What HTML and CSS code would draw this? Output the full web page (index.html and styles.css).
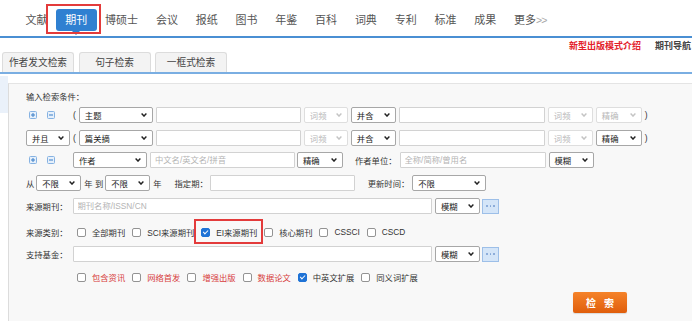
FILE: index.html
```html
<!DOCTYPE html>
<html lang="zh-CN">
<head>
<meta charset="utf-8">
<title>期刊检索</title>
<link rel="stylesheet" href="styles.css">
</head>
<body>
<header class="nav">
  <a class="nav-item">文献</a>
  <a class="nav-item active"><span class="pill">期刊</span><span class="mark-box nav-mark"></span></a>
  <a class="nav-item">博硕士</a>
  <a class="nav-item">会议</a>
  <a class="nav-item">报纸</a>
  <a class="nav-item">图书</a>
  <a class="nav-item">年鉴</a>
  <a class="nav-item">百科</a>
  <a class="nav-item">词典</a>
  <a class="nav-item">专利</a>
  <a class="nav-item">标准</a>
  <a class="nav-item">成果</a>
  <a class="nav-item">更多<span class="more-arrows">&gt;&gt;</span></a>
</header>

<div class="subbar">
  <a class="promo">新型出版模式介绍</a>
  <a class="guide">期刊导航</a>
</div>

<nav class="tabs">
  <a class="tab">作者发文检索</a>
  <a class="tab">句子检索</a>
  <a class="tab">一框式检索</a>
</nav>

<main class="main">
  <aside class="side"><div class="side-active"></div></aside>
  <section class="panel">
    <div class="title">输入检索条件：</div>

    <div class="row r1">
      <span class="lead icons">
        <svg class="pm" viewBox="0 0 8 8"><rect x="0.5" y="0.5" width="7" height="7" rx="1"/><path d="M2 4h4M4 2v4"/></svg>
        <svg class="pm" viewBox="0 0 8 8"><rect x="0.5" y="0.5" width="7" height="7" rx="1"/><path d="M2 4h4"/></svg>
      </span>
      <span class="paren">(</span>
      <span class="sel w74">主题<svg class="chev" viewBox="0 0 6 4"><path d="M0.6 0.6L3 3.1L5.4 0.6"/></svg></span>
      <input class="inp w145" type="text">
      <span class="sel dis w44">词频<svg class="chev" viewBox="0 0 6 4"><path d="M0.6 0.6L3 3.1L5.4 0.6"/></svg></span>
      <span class="sel w45">并含<svg class="chev" viewBox="0 0 6 4"><path d="M0.6 0.6L3 3.1L5.4 0.6"/></svg></span>
      <input class="inp w146" type="text">
      <span class="sel dis w45">词频<svg class="chev" viewBox="0 0 6 4"><path d="M0.6 0.6L3 3.1L5.4 0.6"/></svg></span>
      <span class="sel dis w46">精确<svg class="chev" viewBox="0 0 6 4"><path d="M0.6 0.6L3 3.1L5.4 0.6"/></svg></span>
      <span class="paren">)</span>
    </div>

    <div class="row r2">
      <span class="sel lead-sel">并且<svg class="chev" viewBox="0 0 6 4"><path d="M0.6 0.6L3 3.1L5.4 0.6"/></svg></span>
      <span class="paren">(</span>
      <span class="sel w74">篇关摘<svg class="chev" viewBox="0 0 6 4"><path d="M0.6 0.6L3 3.1L5.4 0.6"/></svg></span>
      <input class="inp w145" type="text">
      <span class="sel dis w44">词频<svg class="chev" viewBox="0 0 6 4"><path d="M0.6 0.6L3 3.1L5.4 0.6"/></svg></span>
      <span class="sel w45">并含<svg class="chev" viewBox="0 0 6 4"><path d="M0.6 0.6L3 3.1L5.4 0.6"/></svg></span>
      <input class="inp w146" type="text">
      <span class="sel dis w45">词频<svg class="chev" viewBox="0 0 6 4"><path d="M0.6 0.6L3 3.1L5.4 0.6"/></svg></span>
      <span class="sel w46">精确<svg class="chev" viewBox="0 0 6 4"><path d="M0.6 0.6L3 3.1L5.4 0.6"/></svg></span>
      <span class="paren">)</span>
    </div>

    <div class="row r3">
      <span class="lead icons">
        <svg class="pm" viewBox="0 0 8 8"><rect x="0.5" y="0.5" width="7" height="7" rx="1"/><path d="M2 4h4M4 2v4"/></svg>
        <svg class="pm" viewBox="0 0 8 8"><rect x="0.5" y="0.5" width="7" height="7" rx="1"/><path d="M2 4h4"/></svg>
      </span>
      <span class="sel w74">作者<svg class="chev" viewBox="0 0 6 4"><path d="M0.6 0.6L3 3.1L5.4 0.6"/></svg></span>
      <input class="inp w145" type="text" placeholder="中文名/英文名/拼音">
      <span class="sel w46 tight">精确<svg class="chev" viewBox="0 0 6 4"><path d="M0.6 0.6L3 3.1L5.4 0.6"/></svg></span>
      <span class="label unit">作者单位：</span>
      <input class="inp w146" type="text" placeholder="全称/简称/曾用名">
      <span class="sel w45">模糊<svg class="chev" viewBox="0 0 6 4"><path d="M0.6 0.6L3 3.1L5.4 0.6"/></svg></span>
    </div>

    <div class="row r4">
      <span class="label">从</span>
      <span class="sel w45">不限<svg class="chev" viewBox="0 0 6 4"><path d="M0.6 0.6L3 3.1L5.4 0.6"/></svg></span>
      <span class="label sp">年 到</span>
      <span class="sel w45">不限<svg class="chev" viewBox="0 0 6 4"><path d="M0.6 0.6L3 3.1L5.4 0.6"/></svg></span>
      <span class="label sp">年</span>
      <span class="label far">指定期：</span>
      <input class="inp w145" type="text">
      <span class="label far">更新时间：</span>
      <span class="sel w74 sp">不限<svg class="chev" viewBox="0 0 6 4"><path d="M0.6 0.6L3 3.1L5.4 0.6"/></svg></span>
    </div>

    <div class="row r5">
      <span class="label lead">来源期刊：</span>
      <input class="inp w359" type="text" placeholder="期刊名称/ISSN/CN">
      <span class="sel w45">模糊<svg class="chev" viewBox="0 0 6 4"><path d="M0.6 0.6L3 3.1L5.4 0.6"/></svg></span>
      <span class="dots"><i></i><i></i><i></i></span>
    </div>

    <div class="row r6">
      <span class="label lead">来源类别：</span>
      <span class="checks">
        <label class="chk"><input class="cb" type="checkbox"><span>全部期刊</span></label>
        <label class="chk"><input class="cb" type="checkbox"><span>SCI来源期刊</span></label>
        <label class="chk marked"><input class="cb" type="checkbox" checked><span>EI来源期刊</span><span class="mark-box"></span></label>
        <label class="chk"><input class="cb" type="checkbox"><span>核心期刊</span></label>
        <label class="chk"><input class="cb" type="checkbox"><span>CSSCI</span></label>
        <label class="chk"><input class="cb" type="checkbox"><span>CSCD</span></label>
      </span>
    </div>

    <div class="row r7">
      <span class="label lead">支持基金：</span>
      <input class="inp w359" type="text">
      <span class="sel w45">模糊<svg class="chev" viewBox="0 0 6 4"><path d="M0.6 0.6L3 3.1L5.4 0.6"/></svg></span>
      <span class="dots"><i></i><i></i><i></i></span>
    </div>

    <div class="row r8">
      <span class="lead"></span>
      <span class="checks">
        <label class="chk red"><input class="cb" type="checkbox"><span>包含资讯</span></label>
        <label class="chk red"><input class="cb" type="checkbox"><span>网络首发</span></label>
        <label class="chk red"><input class="cb" type="checkbox"><span>增强出版</span></label>
        <label class="chk red"><input class="cb" type="checkbox"><span>数据论文</span></label>
        <label class="chk"><input class="cb" type="checkbox" checked><span>中英文扩展</span></label>
        <label class="chk"><input class="cb" type="checkbox"><span>同义词扩展</span></label>
      </span>
    </div>

    <div class="row r9">
      <button class="search" type="button">检 索</button>
    </div>
  </section>
</main>
</body>
</html>
```

FILE: styles.css
```css
* { box-sizing: border-box; }
html, body { margin: 0; padding: 0; }
body {
  width: 692px;
  height: 321px;
  overflow: hidden;
  background: #fff;
  color: #333;
  font-family: "Liberation Sans", "Noto Sans CJK SC", sans-serif;
}
a { text-decoration: none; color: inherit; cursor: pointer; }

/* ---------- top navigation ---------- */
.nav {
  display: flex;
  align-items: center;
  height: 38px;
  padding: 4px 0 0 25.5px;
  gap: 17.8px;
  border-bottom: 2px solid #4a8fd3;
  font-size: 11px;
}
.nav-item {
  position: relative;
  height: 22px;
  line-height: 22px;
  color: #555;
  white-space: nowrap;
}
.pill {
  position: relative;
  display: block;
  margin: 0 -9.3px;
  padding: 0 9.3px;
  border-radius: 3px;
  background: #2f80d1;
  color: #fff;
}
.pill::after {
  content: "";
  position: absolute;
  left: 50%;
  bottom: -4px;
  margin-left: -4px;
  border-left: 4px solid transparent;
  border-right: 4px solid transparent;
  border-top: 4px solid #2f80d1;
}
.mark-box {
  position: absolute;
  border: 2px solid #e33b3b;
  pointer-events: none;
}
.nav-mark {
  left: -19px;
  top: -5px;
  width: 55px;
  height: 30px;
}
.more-arrows {
  color: #a8a8a8;
  font-size: 10.5px;
  letter-spacing: -1px;
}

/* ---------- sub bar ---------- */
.subbar {
  display: flex;
  justify-content: flex-end;
  gap: 14px;
  height: 14px;
  padding-right: 1px;
  font-size: 9px;
  line-height: 16px;
  font-weight: bold;
}
.promo { color: #e3202a; }
.guide { color: #444; }

/* ---------- tabs ---------- */
.tabs {
  display: flex;
  gap: 4.5px;
  height: 22px;
  padding-left: 2px;
  border-bottom: 2px solid #7aaee2;
}
.tab {
  width: 72px;
  height: 20px;
  border: 1px solid #dcdcdc;
  border-bottom: none;
  border-radius: 3px 3px 0 0;
  background: #f3f3f3;
  color: #444;
  font-size: 9.7px;
  line-height: 19px;
  text-align: center;
}

/* ---------- main ---------- */
.main {
  display: flex;
  height: 247px;
}
.side {
  width: 8px;
  flex: none;
  padding-top: 2px;
}
.side-active {
  height: 37px;
  background: #eaf1fa;
}
.panel {
  flex: 1;
  margin-top: 9px;
  padding: 7px 0 0 17px;
  border-top: 1px solid #e4e4e4;
  border-left: 1px solid #dcdcdc;
  background: #f8f8f8;
  font-size: 8.3px;
}
.title {
  height: 12px;
  line-height: 12px;
  color: #333;
}

.row {
  display: flex;
  align-items: center;
  gap: 3px;
  height: 16px;
  margin-top: 7px;
  white-space: nowrap;
}
.r1 { margin-top: 4px; }
.r3 { margin-top: 6px; }
.r6 { height: 18px; margin-top: 9px; }
.r7 { margin-top: 5px; }
.r9 { height: 21px; }

.lead {
  width: 44px;
  flex: none;
}
.r5 .lead, .r6 .lead, .r7 .lead, .r8 .lead { width: 47px; margin-right: -3px; }
.icons {
  display: flex;
  align-items: center;
  gap: 10px;
  padding-left: 3px;
}
.pm {
  width: 8px;
  height: 8px;
}
.pm rect { fill: #e6f0fb; stroke: #86b2e2; stroke-width: 1; }
.pm path { stroke: #3b7ec7; stroke-width: 1; fill: none; }

.paren { color: #333; font-size: 8.5px; }
.label { color: #333; }
.r4 { gap: 2px; }
.r4 .sp { margin-left: 1px; }
.r4 .far { margin-left: 11px; }
.r3 .tight { margin-left: -1px; }
.r3 .unit { margin-left: 9px; }

.sel {
  display: inline-flex;
  align-items: center;
  justify-content: space-between;
  flex: none;
  height: 16px;
  padding: 0 5px;
  border: 1px solid #a7a7a7;
  border-radius: 2px;
  background: #fff;
  color: #222;
}
.sel.dis {
  border-color: #dedede;
  color: #b8b8b8;
}
.chev {
  width: 6px;
  height: 4px;
}
.chev path { fill: none; stroke: currentColor; stroke-width: 1.4; }
.sel.dis .chev { color: #c4c4c4; }
.lead-sel { width: 44px; }
.w44 { width: 44px; }
.w45 { width: 45px; }
.w46 { width: 46px; }
.w74 { width: 74px; }
.w145 { width: 145px; }
.w146 { width: 146px; }
.w359 { width: 359px; }

.inp {
  flex: none;
  height: 16px;
  margin: 0;
  padding: 0 4px;
  border: 1px solid #d2d2d2;
  border-radius: 1px;
  background: #fff;
  color: #333;
  font-family: inherit;
  font-size: 8.3px;
  outline: none;
}
.inp::placeholder { color: #b4b4b4; }
.r5 .inp { padding-left: 3.5px; }

.dots {
  display: inline-flex;
  align-items: center;
  justify-content: center;
  gap: 2px;
  width: 17px;
  height: 15px;
  margin-left: -1px;
  border: 1px solid #9dbfe8;
  background: #d4e5f8;
}
.dots i {
  width: 1.6px;
  height: 1.6px;
  border-radius: 50%;
  background: #7fa2d4;
}

.checks {
  display: flex;
  align-items: center;
  gap: 7px;
  margin-left: 4px;
  height: 100%;
}
.chk {
  position: relative;
  display: inline-flex;
  align-items: center;
  gap: 6px;
  height: 100%;
  color: #333;
}
.chk.red { color: #d73c3c; }
.cb {
  -webkit-appearance: none;
  appearance: none;
  position: relative;
  flex: none;
  width: 9px;
  height: 9px;
  margin: 0;
  border: 1px solid #939393;
  border-radius: 2px;
  background: #fff;
}
.cb:checked {
  background: #1f73d6;
  border-color: #1f73d6;
}
.cb:checked::after {
  content: "";
  position: absolute;
  left: 2.2px;
  top: 0.2px;
  width: 2px;
  height: 4.4px;
  border: solid #fff;
  border-width: 0 1.4px 1.4px 0;
  transform: rotate(45deg);
}
.marked .mark-box {
  left: -7px;
  right: -5.5px;
  top: -4px;
  bottom: -3px;
}

.search {
  width: 54px;
  height: 21px;
  margin-left: 547px;
  padding: 0 0 0 2.5px;
  border: none;
  border-radius: 2px;
  background: linear-gradient(#f5832a, #e05e0c);
  color: #fff;
  font-family: inherit;
  font-size: 10px;
  font-weight: bold;
  letter-spacing: 2.5px;
  box-shadow: 0 1px 1px rgba(0,0,0,0.12);
}
```
